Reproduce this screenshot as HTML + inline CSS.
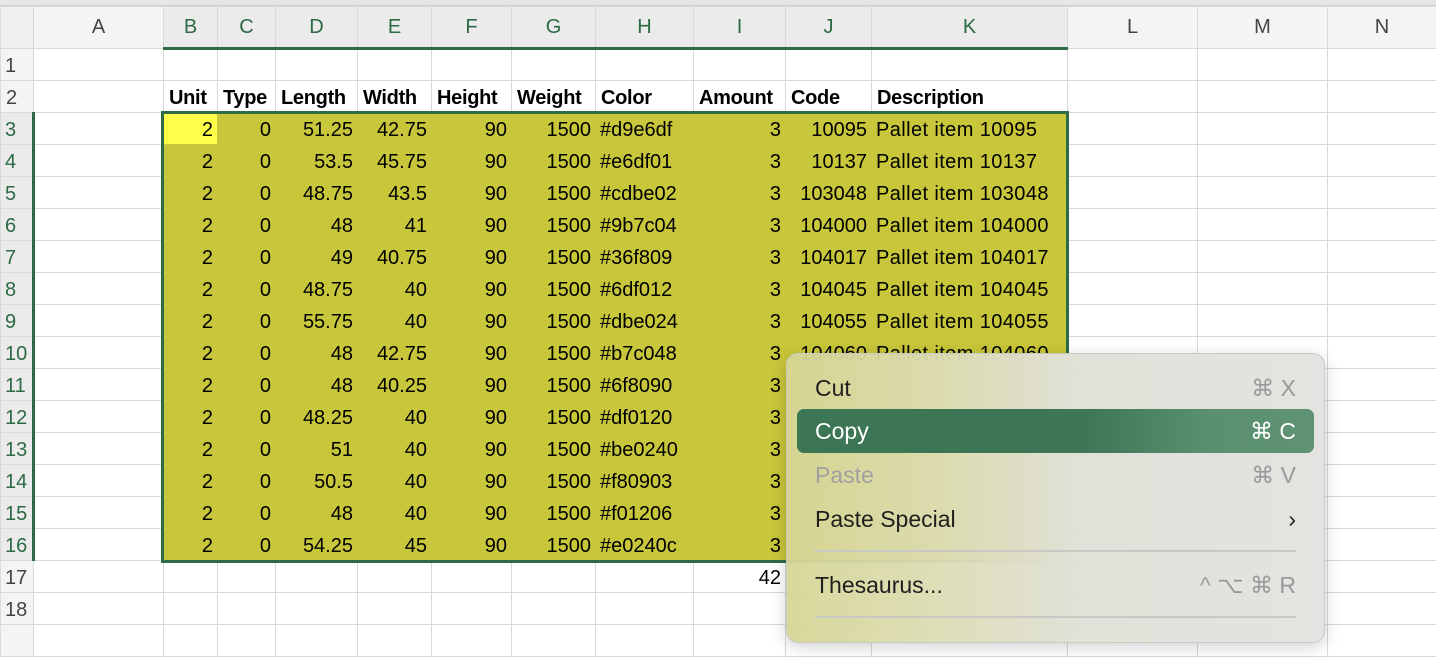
<!DOCTYPE html>
<html><head><meta charset="utf-8"><style>
body{margin:0;width:1436px;height:630px;overflow:hidden;background:#fff;font-family:"Liberation Sans",sans-serif;position:relative}
.top{position:absolute;left:0;top:0;width:1436px;height:6px;background:#e6e6e6;border-bottom:1px solid #cfcfcf;box-sizing:border-box}
table{position:absolute;left:0;top:6px;border-collapse:collapse;table-layout:fixed;width:1436px}
td{border:1px solid #d8d8d8;height:32px;padding:4px 4px 0;font-size:20px;white-space:nowrap;overflow:hidden;color:#000;text-align:right;box-sizing:border-box}
tr.h td{height:42px;padding-top:0;background:#f4f4f4;text-align:center;color:#444;font-size:20px;border-color:#dadada}
tr.h td.s{background:#ebebeb;color:#2c6a43;border-bottom:3px solid #2f6b45}
td.r{background:#f4f4f4;text-align:left;padding-left:4px;color:#444;border-color:#dadada}
td.rs{background:#ebebeb;color:#2c6a43;border-right:3px solid #2f6b45}
tr.b td{font-weight:bold;text-align:left;padding-left:5px;letter-spacing:-0.3px}
tr.d td.f{background:#c8c63a;border-color:#c8c63a}
td.l{text-align:left}
td.w{letter-spacing:0.4px}
td.y{background:#ffff4a!important}
.sel{position:absolute;left:161px;top:111px;width:908px;height:452px;border:3px solid #2f6b45;box-sizing:border-box}
.menu{position:absolute;left:786px;top:353px;width:539px;height:290px;border-radius:12px;border:1px solid #c9c9c6;box-sizing:border-box;background:linear-gradient(90deg,rgba(214,214,150,.95) 0%,rgba(220,220,180,.95) 28%,#e1e1d9 55%,#e3e3e1 100%);box-shadow:0 4px 16px rgba(0,0,0,.18);font-size:23px;color:#1e1e1e}
.it{position:absolute;left:28px;right:28px;height:40px;line-height:40px}
.it .k{position:absolute;right:0;top:0;color:#9a9a9a}
.hl{position:absolute;left:10px;top:55px;width:517px;height:44px;border-radius:7px;background:linear-gradient(90deg,#3d7655 0%,#3d7655 55%,#5a9070 80%,#5f9273 100%)}
.sep{position:absolute;left:28px;right:28px;height:2px;background:#c8c8c4}
</style></head><body>
<div class="top"></div>
<table>
<colgroup><col style="width:33px"><col style="width:130px"><col style="width:54px"><col style="width:58px"><col style="width:82px"><col style="width:74px"><col style="width:80px"><col style="width:84px"><col style="width:98px"><col style="width:92px"><col style="width:86px"><col style="width:196px"><col style="width:130px"><col style="width:130px"><col style="width:109px"></colgroup>
<tr class="h"><td style="background:#f0f0f0"></td><td>A</td><td class="s">B</td><td class="s">C</td><td class="s">D</td><td class="s">E</td><td class="s">F</td><td class="s">G</td><td class="s">H</td><td class="s">I</td><td class="s">J</td><td class="s">K</td><td>L</td><td>M</td><td>N</td></tr>
<tr><td class="r">1</td><td></td><td></td><td></td><td></td><td></td><td></td><td></td><td></td><td></td><td></td><td></td><td></td><td></td><td></td></tr>
<tr class="b"><td class="r" style="font-weight:normal">2</td><td></td><td>Unit</td><td>Type</td><td>Length</td><td>Width</td><td>Height</td><td>Weight</td><td>Color</td><td>Amount</td><td>Code</td><td>Description</td><td></td><td></td><td></td></tr>
<tr class="d"><td class="r rs">3</td><td></td><td class="f y">2</td><td class="f">0</td><td class="f">51.25</td><td class="f">42.75</td><td class="f">90</td><td class="f">1500</td><td class="f l">#d9e6df</td><td class="f">3</td><td class="f">10095</td><td class="f l w">Pallet item 10095</td><td></td><td></td><td></td></tr>
<tr class="d"><td class="r rs">4</td><td></td><td class="f">2</td><td class="f">0</td><td class="f">53.5</td><td class="f">45.75</td><td class="f">90</td><td class="f">1500</td><td class="f l">#e6df01</td><td class="f">3</td><td class="f">10137</td><td class="f l w">Pallet item 10137</td><td></td><td></td><td></td></tr>
<tr class="d"><td class="r rs">5</td><td></td><td class="f">2</td><td class="f">0</td><td class="f">48.75</td><td class="f">43.5</td><td class="f">90</td><td class="f">1500</td><td class="f l">#cdbe02</td><td class="f">3</td><td class="f">103048</td><td class="f l w">Pallet item 103048</td><td></td><td></td><td></td></tr>
<tr class="d"><td class="r rs">6</td><td></td><td class="f">2</td><td class="f">0</td><td class="f">48</td><td class="f">41</td><td class="f">90</td><td class="f">1500</td><td class="f l">#9b7c04</td><td class="f">3</td><td class="f">104000</td><td class="f l w">Pallet item 104000</td><td></td><td></td><td></td></tr>
<tr class="d"><td class="r rs">7</td><td></td><td class="f">2</td><td class="f">0</td><td class="f">49</td><td class="f">40.75</td><td class="f">90</td><td class="f">1500</td><td class="f l">#36f809</td><td class="f">3</td><td class="f">104017</td><td class="f l w">Pallet item 104017</td><td></td><td></td><td></td></tr>
<tr class="d"><td class="r rs">8</td><td></td><td class="f">2</td><td class="f">0</td><td class="f">48.75</td><td class="f">40</td><td class="f">90</td><td class="f">1500</td><td class="f l">#6df012</td><td class="f">3</td><td class="f">104045</td><td class="f l w">Pallet item 104045</td><td></td><td></td><td></td></tr>
<tr class="d"><td class="r rs">9</td><td></td><td class="f">2</td><td class="f">0</td><td class="f">55.75</td><td class="f">40</td><td class="f">90</td><td class="f">1500</td><td class="f l">#dbe024</td><td class="f">3</td><td class="f">104055</td><td class="f l w">Pallet item 104055</td><td></td><td></td><td></td></tr>
<tr class="d"><td class="r rs">10</td><td></td><td class="f">2</td><td class="f">0</td><td class="f">48</td><td class="f">42.75</td><td class="f">90</td><td class="f">1500</td><td class="f l">#b7c048</td><td class="f">3</td><td class="f">104060</td><td class="f l w">Pallet item 104060</td><td></td><td></td><td></td></tr>
<tr class="d"><td class="r rs">11</td><td></td><td class="f">2</td><td class="f">0</td><td class="f">48</td><td class="f">40.25</td><td class="f">90</td><td class="f">1500</td><td class="f l">#6f8090</td><td class="f">3</td><td class="f"></td><td class="f l"></td><td></td><td></td><td></td></tr>
<tr class="d"><td class="r rs">12</td><td></td><td class="f">2</td><td class="f">0</td><td class="f">48.25</td><td class="f">40</td><td class="f">90</td><td class="f">1500</td><td class="f l">#df0120</td><td class="f">3</td><td class="f"></td><td class="f l"></td><td></td><td></td><td></td></tr>
<tr class="d"><td class="r rs">13</td><td></td><td class="f">2</td><td class="f">0</td><td class="f">51</td><td class="f">40</td><td class="f">90</td><td class="f">1500</td><td class="f l">#be0240</td><td class="f">3</td><td class="f"></td><td class="f l"></td><td></td><td></td><td></td></tr>
<tr class="d"><td class="r rs">14</td><td></td><td class="f">2</td><td class="f">0</td><td class="f">50.5</td><td class="f">40</td><td class="f">90</td><td class="f">1500</td><td class="f l">#f80903</td><td class="f">3</td><td class="f"></td><td class="f l"></td><td></td><td></td><td></td></tr>
<tr class="d"><td class="r rs">15</td><td></td><td class="f">2</td><td class="f">0</td><td class="f">48</td><td class="f">40</td><td class="f">90</td><td class="f">1500</td><td class="f l">#f01206</td><td class="f">3</td><td class="f"></td><td class="f l"></td><td></td><td></td><td></td></tr>
<tr class="d"><td class="r rs">16</td><td></td><td class="f">2</td><td class="f">0</td><td class="f">54.25</td><td class="f">45</td><td class="f">90</td><td class="f">1500</td><td class="f l">#e0240c</td><td class="f">3</td><td class="f"></td><td class="f l"></td><td></td><td></td><td></td></tr>
<tr><td class="r">17</td><td></td><td></td><td></td><td></td><td></td><td></td><td></td><td></td><td>42</td><td></td><td></td><td></td><td></td><td></td></tr>
<tr><td class="r">18</td><td></td><td></td><td></td><td></td><td></td><td></td><td></td><td></td><td></td><td></td><td></td><td></td><td></td><td></td></tr>
<tr><td class="r"></td><td></td><td></td><td></td><td></td><td></td><td></td><td></td><td></td><td></td><td></td><td></td><td></td><td></td><td></td></tr>
</table>
<div class="sel"></div>
<div class="menu">
<div class="it" style="top:14px">Cut<span class="k">⌘ X</span></div>
<div class="hl"></div>
<div class="it" style="top:57px;color:#fff">Copy<span class="k" style="color:#fff">⌘ C</span></div>
<div class="it" style="top:101px;color:#a0a0a0">Paste<span class="k">⌘ V</span></div>
<div class="it" style="top:145px">Paste Special<span class="k" style="color:#222">›</span></div>
<div class="sep" style="top:196px"></div>
<div class="it" style="top:211px">Thesaurus...<span class="k">^ ⌥ ⌘ R</span></div>
<div class="sep" style="top:262px"></div>
</div>
</body></html>
